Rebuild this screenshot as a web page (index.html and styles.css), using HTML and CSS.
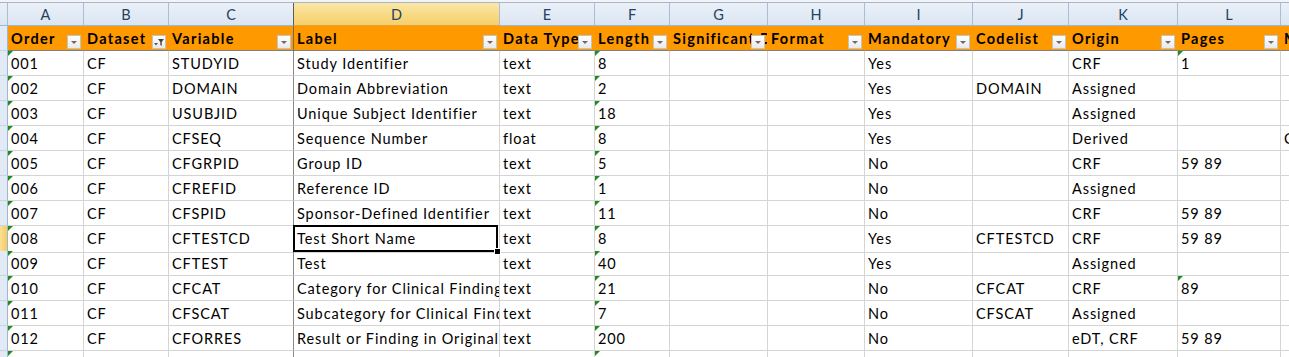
FILE: index.html
```html
<!DOCTYPE html>
<html>
<head>
  <meta charset="UTF-8">
  <title>CF Variables</title>
  <link rel="stylesheet" href="styles.css">
</head>
<body>
  <div class="sheet">
    <div class="topline"></div>
    <div class="row letters">
      <div class="rh"></div>
      <div class="cl">A</div><div class="cl">B</div><div class="cl cl-c">C</div><div class="cl cl-sel">D</div>
      <div class="cl">E</div><div class="cl">F</div><div class="cl">G</div><div class="cl">H</div>
      <div class="cl">I</div><div class="cl">J</div><div class="cl">K</div><div class="cl">L</div><div class="cl">M</div>
    </div>
    <div class="row head">
      <div class="rh"></div>
      <div class="hc">Order<span class="fbtn"></span></div>
      <div class="hc">Dataset<span class="fbtn on"><svg width="12" height="12" viewBox="0 0 12 12"><path d="M1 7h4l-2 2.5z" fill="#555"/><path d="M5 3h6l-2.3 3v4l-1.4-1v-3z" fill="#444"/></svg></span></div>
      <div class="hc c-col">Variable<span class="fbtn"></span></div>
      <div class="hc">Label<span class="fbtn"></span></div>
      <div class="hc">Data Type<span class="fbtn"></span></div>
      <div class="hc">Length<span class="fbtn"></span></div>
      <div class="hc">Significant Digits<span class="fbtn"></span></div>
      <div class="hc">Format<span class="fbtn"></span></div>
      <div class="hc">Mandatory<span class="fbtn"></span></div>
      <div class="hc">Codelist<span class="fbtn"></span></div>
      <div class="hc">Origin<span class="fbtn"></span></div>
      <div class="hc">Pages<span class="fbtn"></span></div>
      <div class="hc">Method<span class="fbtn"></span></div>
    </div>
    <div id="rows"></div>
  </div>
  <script src="script.js"></script>
</body>
</html>
```

FILE: script.js
```js
// order, dataset, variable, label, type, length, sig, format, mandatory, codelist, origin, pages, method
const data = [
  ['001', 'CF', 'STUDYID', 'Study Identifier', 'text', '8', '', '', 'Yes', '', 'CRF', '1', ''],
  ['002', 'CF', 'DOMAIN', 'Domain Abbreviation', 'text', '2', '', '', 'Yes', 'DOMAIN', 'Assigned', '', ''],
  ['003', 'CF', 'USUBJID', 'Unique Subject Identifier', 'text', '18', '', '', 'Yes', '', 'Assigned', '', ''],
  ['004', 'CF', 'CFSEQ', 'Sequence Number', 'float', '8', '', '', 'Yes', '', 'Derived', '', 'CF.SEQ'],
  ['005', 'CF', 'CFGRPID', 'Group ID', 'text', '5', '', '', 'No', '', 'CRF', '59 89', ''],
  ['006', 'CF', 'CFREFID', 'Reference ID', 'text', '1', '', '', 'No', '', 'Assigned', '', ''],
  ['007', 'CF', 'CFSPID', 'Sponsor-Defined Identifier', 'text', '11', '', '', 'No', '', 'CRF', '59 89', ''],
  ['008', 'CF', 'CFTESTCD', 'Test Short Name', 'text', '8', '', '', 'Yes', 'CFTESTCD', 'CRF', '59 89', ''],
  ['009', 'CF', 'CFTEST', 'Test', 'text', '40', '', '', 'Yes', '', 'Assigned', '', ''],
  ['010', 'CF', 'CFCAT', 'Category for Clinical Findings', 'text', '21', '', '', 'No', 'CFCAT', 'CRF', '89', ''],
  ['011', 'CF', 'CFSCAT', 'Subcategory for Clinical Findings', 'text', '7', '', '', 'No', 'CFSCAT', 'Assigned', '', ''],
  ['012', 'CF', 'CFORRES', 'Result or Finding in Original Units', 'text', '200', '', '', 'No', '', 'eDT, CRF', '59 89', ''],
  ['013', 'CF', 'CFSTRESC', 'Character Result/Finding in Std Format', 'text', '200', '', '', 'No', '', 'Derived', '', '']
];

// cells stored as text (numbers as text) get the green marker
const flagged = { 0: () => true, 5: () => true, 11: v => v === '1' || v === '89' };

const rows = document.getElementById('rows');
data.forEach((r, i) => {
  const row = document.createElement('div');
  row.className = 'row data';
  const rh = document.createElement('div');
  rh.className = i === 7 ? 'rh rh-sel' : 'rh';
  row.appendChild(rh);
  r.forEach((v, j) => {
    const c = document.createElement('div');
    c.className = 'dc';
    if (j === 2) c.classList.add('c-col');
    if (flagged[j] && flagged[j](v)) c.classList.add('warn');
    if (i === 7 && j === 3) c.classList.add('active');
    c.textContent = v;
    row.appendChild(c);
  });
  rows.appendChild(row);
});
```

FILE: styles.css
```css
body {
  margin: 0;
  background: #fff;
  overflow: hidden;
  font-family: Lato, "Liberation Sans", sans-serif;
  font-size: 14.5px;
  color: #000;
}
.sheet {
  width: 1401px;
}
.topline {
  height: 2px;
  background: #f2f4f7;
  border-bottom: 1px solid #a7b6c8;
}
.row {
  display: grid;
  grid-template-columns: 8px 76px 85px 125px 206px 95px 75px 98px 97px 108px 96px 109px 103px 120px;
}
.row > div {
  box-sizing: border-box;
  white-space: nowrap;
  overflow: hidden;
  position: relative;
}

/* column letters */
.letters {
  height: 23px;
}
.letters > div {
  background: linear-gradient(#eaf0f8, #dbe5f2);
  border-right: 1px solid #a9bdd4;
  border-bottom: 1px solid #9eb6ce;
}
.cl {
  text-align: center;
  line-height: 24px;
  font-size: 14.5px;
  color: #27415f;
}
.letters .cl-c {
  border-right-color: #5c5c5c;
}
.letters .cl-sel {
  background: linear-gradient(#fbe7a6, #f6cf6a);
  border-bottom-color: #e2a33a;
}

/* row header strip */
.rh {
  background: #e2eaf5;
  border-right: 1px solid #9eb6ce;
  border-bottom: 1px solid #c5d3e3;
}
.rh-sel {
  background: linear-gradient(90deg, #f9df96, #f6cb63);
  border-bottom-color: #e2a33a;
}

/* table header */
.head {
  height: 25px;
}
.hc {
  background: #ff9900;
  font-weight: bold;
  letter-spacing: 1.3px;
  line-height: 26px;
  padding-left: 3px;
  border-right: 1px solid #ff9900;
  border-bottom: 1px solid #7f7f7f;
}
.head .c-col {
  border-right-color: #6b6b6b;
}
.fbtn {
  position: absolute;
  right: 2px;
  bottom: 1px;
  width: 14px;
  height: 14px;
  box-sizing: border-box;
  border: 1px solid #c3c3c3;
  background: linear-gradient(#ffffff, #e9e9e9);
}
.fbtn::after {
  content: "";
  position: absolute;
  left: 3px;
  top: 5px;
  border-top: 3px solid #6a6a6a;
  border-left: 3px solid transparent;
  border-right: 3px solid transparent;
}
.fbtn.on::after {
  display: none;
}
.fbtn svg {
  display: block;
}

/* data cells */
.data {
  height: 25px;
}
.dc {
  line-height: 26px;
  letter-spacing: 0.9px;
  padding-left: 3px;
  border-right: 1px solid #d4d4d4;
  border-bottom: 1px solid #d4d4d4;
}
.data .c-col {
  border-right-color: #8a8a8a;
}
.warn::before {
  content: "";
  position: absolute;
  left: 0;
  top: 0;
  border-top: 5px solid #1e8c1e;
  border-right: 5px solid transparent;
}
.row > .active {
  overflow: visible;
  z-index: 2;
}
.active::after {
  content: "";
  position: absolute;
  left: -1px;
  top: -1px;
  right: 1px;
  bottom: 0;
  border: 2px solid #000;
}
.active::before {
  content: "";
  position: absolute;
  right: -2px;
  bottom: -3px;
  width: 5px;
  height: 5px;
  background: #000;
  border: 1px solid #fff;
  z-index: 3;
}
```
